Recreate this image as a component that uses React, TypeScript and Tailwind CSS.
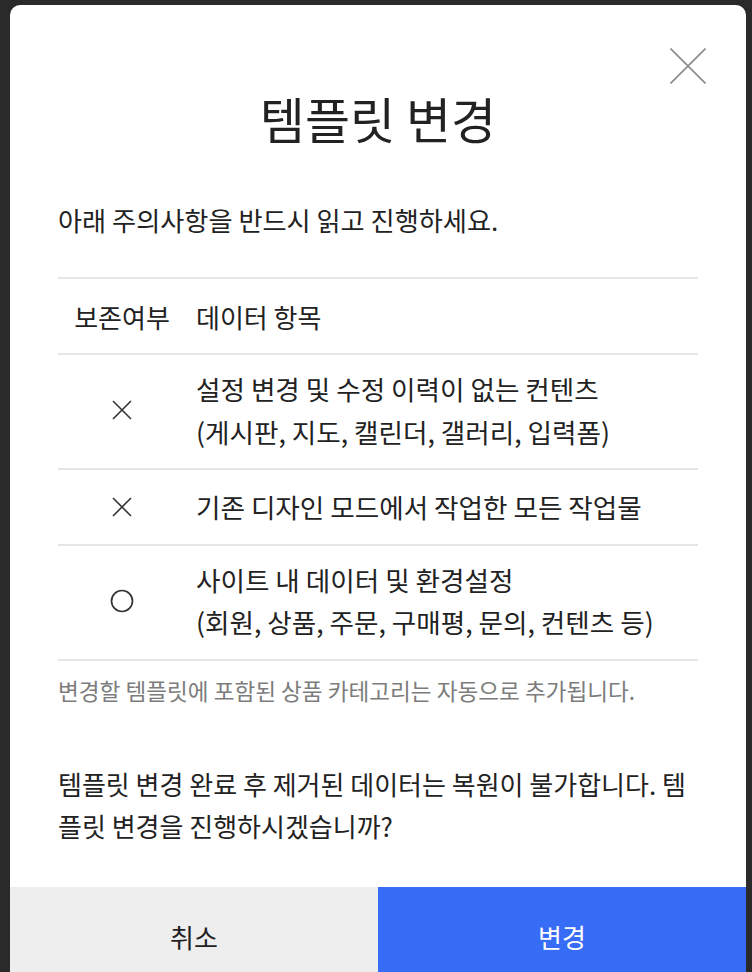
import React from "react";

const XMark = () => (
  <svg width="20" height="20" viewBox="0 0 20 20" fill="none">
    <path d="M1 1 L19 19 M19 1 L1 19" stroke="#333" strokeWidth="1.6" />
  </svg>
);

const OMark = () => (
  <svg width="24" height="24" viewBox="0 0 24 24" fill="none">
    <circle cx="12" cy="12" r="10.5" stroke="#333" strokeWidth="1.7" />
  </svg>
);

export default function App() {
  const font = { fontFamily: '"Noto Sans CJK KR", "Noto Sans", sans-serif' };
  return (
    <div className="h-[972px] w-[752px] overflow-hidden bg-[#2a2a2a]" style={font}>
      <div className="relative ml-[10px] mt-[5px] w-[736px] rounded-t-[10px] bg-white text-[#222]">
        <button className="absolute right-[40px] top-[43px] h-[36px] w-[36px]" aria-label="close">
          <svg width="36" height="36" viewBox="0 0 36 36" fill="none">
            <path d="M0.5 0.5 L35.5 35.5 M35.5 0.5 L0.5 35.5" stroke="#8a8a8a" strokeWidth="1.6" />
          </svg>
        </button>
        <div className="px-[48px] pt-[84px]">
          <h1 className="text-center text-[49px] leading-[58px] font-normal">템플릿 변경</h1>
          <p className="mt-[52px] text-[26.2px] leading-[42px]">아래 주의사항을 반드시 읽고 진행하세요.</p>
          <div className="mt-[36px] border-t-2 border-[#e5e5e5] text-[26.6px]">
            <div className="flex border-b-2 border-[#e5e5e5] pt-[16px] pb-[15px] text-[26px] leading-[43px]">
              <div className="w-[128px] text-center">보존여부</div>
              <div className="pl-[10px]">데이터 항목</div>
            </div>
            <div className="flex items-center border-b-2 border-[#e5e5e5] pt-[12px] pb-[15px] leading-[43px]">
              <div className="flex w-[128px] justify-center"><XMark /></div>
              <div className="pl-[10px]">
                설정 변경 및 수정 이력이 없는 컨텐츠
                <br />
                (게시판, 지도, 캘린더, 갤러리, 입력폼)
              </div>
            </div>
            <div className="flex items-center border-b-2 border-[#e5e5e5] pt-[15px] pb-[16px] leading-[43px]">
              <div className="flex w-[128px] justify-center"><XMark /></div>
              <div className="pl-[10px]">기존 디자인 모드에서 작업한 모든 작업물</div>
            </div>
            <div className="flex items-center border-b-2 border-[#e5e5e5] pt-[13px] pb-[16px] leading-[42px]">
              <div className="flex w-[128px] justify-center"><OMark /></div>
              <div className="pl-[10px]">
                사이트 내 데이터 및 환경설정
                <br />
                (회원, 상품, 주문, 구매평, 문의, 컨텐츠 등)
              </div>
            </div>
          </div>
          <p className="mt-[14px] text-[22.6px] leading-[32px] text-[#7c7c7c]">
            변경할 템플릿에 포함된 상품 카테고리는 자동으로 추가됩니다.
          </p>
          <p className="mt-[56px] text-[26px] leading-[42px]">
            템플릿 변경 완료 후 제거된 데이터는 복원이 불가합니다. 템플릿 변경을 진행하시겠습니까?
          </p>
        </div>
        <div className="mt-[40px] flex h-[98px]">
          <button className="flex-1 bg-[#eeeeee] text-[26px] text-[#222]">취소</button>
          <button className="flex-1 bg-[#376cf7] text-[26px] text-white">변경</button>
        </div>
      </div>
    </div>
  );
}
